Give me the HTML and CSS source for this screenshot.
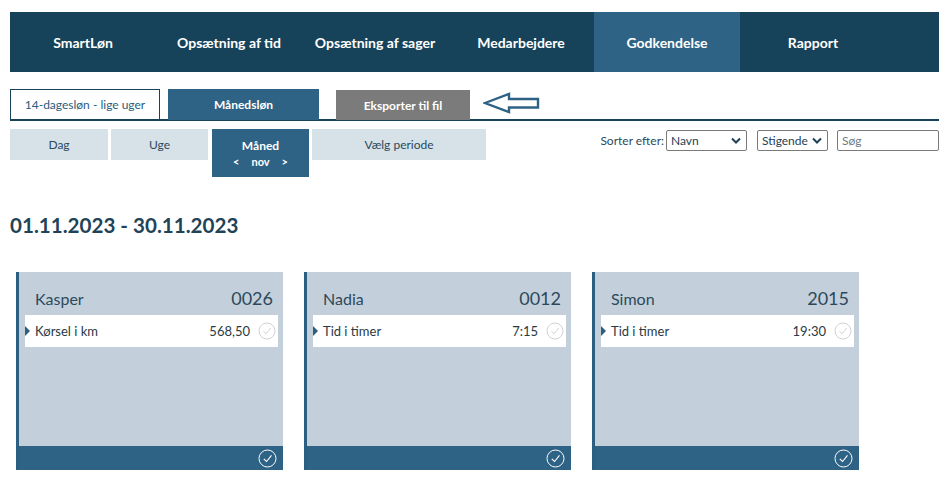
FILE: index.html
```html
<!DOCTYPE html>
<html lang="da">
<head>
<meta charset="utf-8">
<title>Godkendelse</title>
<link rel="stylesheet" href="styles.css">
</head>
<body>
<div class="page">
  <nav class="topnav">
    <a class="nav-item">SmartLøn</a>
    <a class="nav-item">Opsætning af tid</a>
    <a class="nav-item">Opsætning af sager</a>
    <a class="nav-item">Medarbejdere</a>
    <a class="nav-item active">Godkendelse</a>
    <a class="nav-item">Rapport</a>
  </nav>

  <div class="tabs">
    <div class="tab tab-outline">14-dagesløn - lige uger</div>
    <div class="tab tab-active">Månedsløn</div>
    <div class="tab tab-export">Eksporter til fil</div>
    <svg class="arrow" width="58" height="22" viewBox="0 0 58 22">
      <path d="M2 11 L26 2 L26 7 L55 7 L55 15.5 L26 15.5 L26 20 Z" fill="none" stroke="#2e6284" stroke-width="2.4" stroke-linejoin="miter"/>
    </svg>
  </div>

  <div class="period-row">
    <div class="periods">
      <div class="period p-dag">Dag</div>
      <div class="period p-uge">Uge</div>
      <div class="period p-maned">
        <span class="m-title">Måned</span>
        <span class="m-nav"><span>&lt;</span><span>nov</span><span>&gt;</span></span>
      </div>
      <div class="period p-valg">Vælg periode</div>
    </div>
    <div class="sorting">
      <span class="sort-label">Sorter efter:</span>
      <div class="select s-navn"><span>Navn</span>
        <svg width="10" height="7" viewBox="0 0 10 7"><path d="M1 1.5 L5 5.5 L9 1.5" fill="none" stroke="#1d4257" stroke-width="2"/></svg>
      </div>
      <div class="select s-dir"><span>Stigende</span>
        <svg width="10" height="7" viewBox="0 0 10 7"><path d="M1 1.5 L5 5.5 L9 1.5" fill="none" stroke="#1d4257" stroke-width="2"/></svg>
      </div>
      <div class="search">Søg</div>
    </div>
  </div>

  <h1 class="range">01.11.2023 - 30.11.2023</h1>

  <div class="cards">
    <div class="card">
      <div class="card-head"><span class="name">Kasper</span><span class="num">0026</span></div>
      <div class="line">
        <span class="marker"></span>
        <span class="label">Kørsel i km</span>
        <span class="value">568,50</span>
        <svg class="chk" width="18" height="18" viewBox="0 0 18 18"><circle cx="9" cy="9" r="8" fill="none" stroke="#cfd3d6" stroke-width="1"/><path d="M5.5 9.3 L8 11.8 L12.8 6" fill="none" stroke="#cfd3d6" stroke-width="1"/></svg>
      </div>
      <div class="card-body"></div>
      <div class="card-foot">
        <svg width="19" height="19" viewBox="0 0 19 19"><circle cx="9.5" cy="9.5" r="8.5" fill="none" stroke="#ffffff" stroke-width="1"/><path d="M5.8 9.8 L8.5 12.5 L13.5 6.3" fill="none" stroke="#ffffff" stroke-width="1.1"/></svg>
      </div>
    </div>
    <div class="card">
      <div class="card-head"><span class="name">Nadia</span><span class="num">0012</span></div>
      <div class="line">
        <span class="marker"></span>
        <span class="label">Tid i timer</span>
        <span class="value">7:15</span>
        <svg class="chk" width="18" height="18" viewBox="0 0 18 18"><circle cx="9" cy="9" r="8" fill="none" stroke="#cfd3d6" stroke-width="1"/><path d="M5.5 9.3 L8 11.8 L12.8 6" fill="none" stroke="#cfd3d6" stroke-width="1"/></svg>
      </div>
      <div class="card-body"></div>
      <div class="card-foot">
        <svg width="19" height="19" viewBox="0 0 19 19"><circle cx="9.5" cy="9.5" r="8.5" fill="none" stroke="#ffffff" stroke-width="1"/><path d="M5.8 9.8 L8.5 12.5 L13.5 6.3" fill="none" stroke="#ffffff" stroke-width="1.1"/></svg>
      </div>
    </div>
    <div class="card">
      <div class="card-head"><span class="name">Simon</span><span class="num">2015</span></div>
      <div class="line">
        <span class="marker"></span>
        <span class="label">Tid i timer</span>
        <span class="value">19:30</span>
        <svg class="chk" width="18" height="18" viewBox="0 0 18 18"><circle cx="9" cy="9" r="8" fill="none" stroke="#cfd3d6" stroke-width="1"/><path d="M5.5 9.3 L8 11.8 L12.8 6" fill="none" stroke="#cfd3d6" stroke-width="1"/></svg>
      </div>
      <div class="card-body"></div>
      <div class="card-foot">
        <svg width="19" height="19" viewBox="0 0 19 19"><circle cx="9.5" cy="9.5" r="8.5" fill="none" stroke="#ffffff" stroke-width="1"/><path d="M5.8 9.8 L8.5 12.5 L13.5 6.3" fill="none" stroke="#ffffff" stroke-width="1.1"/></svg>
      </div>
    </div>
  </div>
</div>
</body>
</html>
```

FILE: styles.css
```css
* { box-sizing: border-box; }

html, body {
  margin: 0;
  padding: 0;
  background: #ffffff;
}

body {
  font-family: Lato, "Open Sans", "Liberation Sans", sans-serif;
  color: #1f4457;
}

.page {
  width: 949px;
  padding: 12px 10px 0 10px;
}

/* top navigation */
.topnav {
  display: flex;
  height: 60px;
  background: #17435a;
}

.nav-item {
  width: 146px;
  display: flex;
  align-items: center;
  justify-content: center;
  color: #ffffff;
  font-size: 14px;
  font-weight: 700;
}

.nav-item.active {
  background: #2f6385;
}

/* tabs row */
.tabs {
  margin-top: 17px;
  height: 32px;
  display: flex;
  align-items: flex-end;
  border-bottom: 2px solid #17435a;
}

.tab {
  height: 31px;
  display: flex;
  align-items: center;
  justify-content: center;
  font-size: 12px;
  margin-bottom: -1px;
}

.tab-outline {
  width: 150px;
  border: 1px solid #17435a;
  color: #2a5c7c;
  background: #ffffff;
}

.tab-active {
  width: 151px;
  margin-left: 8px;
  background: #2f6385;
  color: #ffffff;
  font-weight: 700;
}

.tab-export {
  width: 134px;
  height: 30px;
  margin-left: 17px;
  background: #7b7b7b;
  color: #ffffff;
  font-weight: 700;
}

.arrow {
  margin-left: 13px;
  margin-bottom: 5px;
}

/* period row */
.period-row {
  margin-top: 8px;
  display: flex;
  justify-content: space-between;
  align-items: flex-start;
}

.periods {
  display: flex;
  align-items: flex-start;
}

.period {
  height: 31px;
  display: flex;
  align-items: center;
  justify-content: center;
  background: #d6e1e8;
  color: #2b4a5c;
  font-size: 12px;
}

.p-dag { width: 98px; }
.p-uge { width: 97px; margin-left: 3px; }
.p-maned {
  width: 97px;
  margin-left: 4px;
  height: 48px;
  background: #2f6385;
  color: #ffffff;
  flex-direction: column;
  justify-content: flex-start;
  padding-top: 8px;
  font-weight: 700;
}
.p-valg { width: 174px; margin-left: 3px; }

.m-title {
  font-size: 12px;
  line-height: 17px;
}

.m-nav {
  display: flex;
  gap: 12px;
  font-size: 11px;
  line-height: 14px;
  margin-top: 1px;
}

.sorting {
  display: flex;
  align-items: center;
  margin-top: 1px;
  font-size: 12px;
  color: #2b4a5c;
}

.sort-label {
  margin-right: 2px;
}

.select {
  height: 21px;
  border: 1px solid #7a7a7a;
  border-radius: 2px;
  display: flex;
  align-items: center;
  justify-content: space-between;
  padding: 0 5px 0 4px;
  color: #1d4257;
  font-size: 12px;
}

.s-navn { width: 81px; }
.s-dir { width: 71px; margin-left: 10px; }

.search {
  width: 102px;
  height: 21px;
  margin-left: 9px;
  border: 1px solid #7a7a7a;
  border-radius: 2px;
  padding-left: 4px;
  display: flex;
  align-items: center;
  color: #6d7b84;
  font-size: 12px;
}

/* heading */
.range {
  margin: 36px 0 0 0;
  font-size: 20.6px;
  font-weight: 700;
  line-height: 24px;
  color: #1f4457;
}

/* cards */
.cards {
  display: flex;
  gap: 21px;
  margin-top: 35px;
  margin-left: 6px;
}

.card {
  width: 267px;
  height: 198px;
  background: #c3d0db;
  border-left: 3px solid #2b5f81;
  display: flex;
  flex-direction: column;
}

.card-head {
  height: 43px;
  display: flex;
  justify-content: space-between;
  align-items: baseline;
  padding: 15px 10px 0 16px;
  color: #2c495b;
}

.name {
  font-size: 16px;
}

.num {
  font-size: 18px;
}

.line {
  margin: 0 5px 0 6px;
  height: 32px;
  background: #ffffff;
  display: flex;
  align-items: center;
  font-size: 13px;
  color: #2a3a44;
}

.marker {
  width: 0;
  height: 0;
  border-top: 5px solid transparent;
  border-bottom: 5px solid transparent;
  border-left: 5px solid #2b5f81;
}

.label {
  margin-left: 5px;
  flex: 1;
}

.value {
  margin-right: 8px;
}

.chk {
  margin-right: 2px;
}

.card-body {
  flex: 1;
}

.card-foot {
  height: 24px;
  background: #2f6385;
  display: flex;
  align-items: center;
  justify-content: flex-end;
  padding-right: 6px;
}
```
